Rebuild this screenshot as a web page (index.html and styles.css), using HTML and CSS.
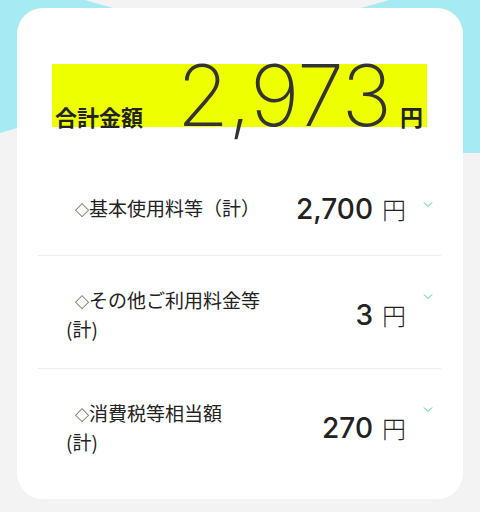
FILE: index.html
```html
<!DOCTYPE html>
<html lang="ja">
<head>
    <meta charset="utf-8" />
    <title>ご利用料金</title>
    <link rel="stylesheet" href="styles.css">
</head>
<body>
    <svg class="backdrop" width="480" height="512" aria-hidden="true">
        <path d="M0 0 H480 V153 H463 L17 128 L0 133 Z" fill="#a6ebf3" />
        <ellipse cx="237" cy="-100" rx="265" ry="122" fill="#f3f3f3" />
    </svg>
    <main class="card">
        <div class="total">
            <span class="total-label">合計金額</span>
            <span class="total-amount">
                <span class="total-num">2,973</span><span class="total-yen">円</span>
            </span>
        </div>
        <div class="row">
            <div class="row-label"><span class="mark">◇</span>基本使用料等（計）</div>
            <div class="row-value"><span class="num">2,700</span><span class="yen">円</span></div>
            <svg class="chevron" width="10" height="7" viewBox="0 0 10 7">
                <path d="M1 1.5 5 5.5 9 1.5" />
            </svg>
        </div>
        <div class="row">
            <div class="row-label"><span class="mark">◇</span>その他ご利用料金等<br>(計)</div>
            <div class="row-value"><span class="num">3</span><span class="yen">円</span></div>
            <svg class="chevron" width="10" height="7" viewBox="0 0 10 7">
                <path d="M1 1.5 5 5.5 9 1.5" />
            </svg>
        </div>
        <div class="row">
            <div class="row-label"><span class="mark">◇</span>消費税等相当額<br>(計)</div>
            <div class="row-value"><span class="num">270</span><span class="yen">円</span></div>
            <svg class="chevron" width="10" height="7" viewBox="0 0 10 7">
                <path d="M1 1.5 5 5.5 9 1.5" />
            </svg>
        </div>
    </main>
</body>
</html>
```

FILE: styles.css
```css
body {
    margin: 0;
    width: 480px;
    height: 512px;
    background: #f3f3f3;
    font-family: "Noto Sans CJK JP", "Noto Sans", sans-serif;
    color: #222;
    position: relative;
    overflow: hidden;
}
.backdrop {
    position: absolute;
    left: 0;
    top: 0;
}
.card {
    position: relative;
    margin: 8px 17px 0 17px;
    height: 491px;
    box-sizing: border-box;
    background: #fff;
    border-radius: 26px;
    padding: 56px 22px 0 21px;
}
.total {
    display: flex;
    align-items: baseline;
    justify-content: space-between;
    height: 63px;
    margin: 0 14px 37px;
    padding: 0 4px 0 3px;
    background: #eeff00;
}
.total-label {
    font-size: 22px;
    font-weight: 700;
    color: #222;
}
.total-num {
    font-family: Inter, "Noto Sans", sans-serif;
    font-size: 85px;
    font-weight: 250;
    line-height: 63px;
    letter-spacing: -1px;
    color: #333;
}
.total-yen {
    margin-left: 9px;
    font-size: 23px;
    font-weight: 700;
}
.row {
    display: flex;
    align-items: center;
    padding: 30px 8px 26px 28px;
    border-top: 1px solid #ececec;
    line-height: 28px;
}
.row:nth-child(2) {
    border-top: none;
    padding-bottom: 32px;
}
.row:nth-child(3) {
    padding-bottom: 25px;
}
.row:last-child {
    padding-bottom: 27px;
}
.row-label {
    flex: 1;
    font-size: 19px;
    text-indent: 9px;
}
.mark {
    font-size: 14px;
    margin-right: 0;
    vertical-align: 1px;
}
.row-value {
    display: flex;
    align-items: baseline;
    color: #222;
}
.num {
    font-family: Inter, "Noto Sans", sans-serif;
    font-size: 28px;
    font-weight: 500;
}
.yen {
    margin-left: 9px;
    font-size: 24px;
    font-weight: 300;
}
.chevron {
    align-self: flex-start;
    margin: 7px 0 0 17px;
}
.chevron path {
    fill: none;
    stroke: #3ec79d;
    stroke-width: 1;
}
```
